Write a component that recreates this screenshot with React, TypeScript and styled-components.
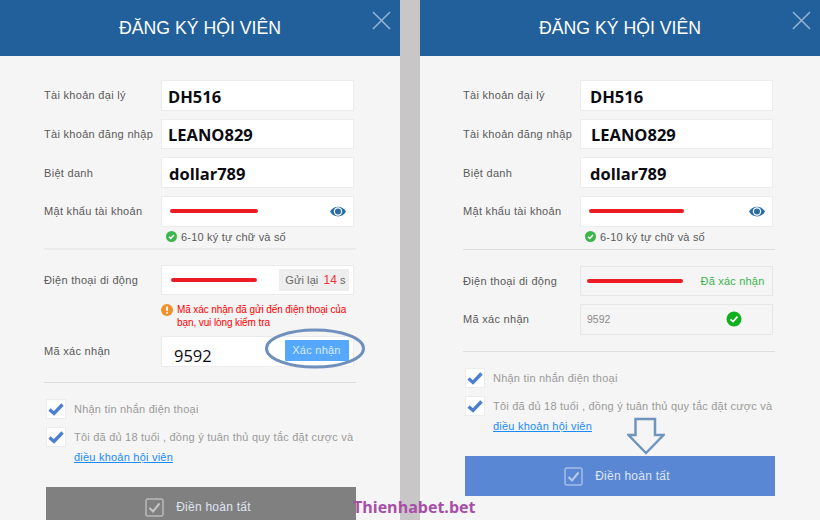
import React from "react";
import styled, { createGlobalStyle } from "styled-components";

const GlobalStyle = createGlobalStyle`
  html, body {
    margin: 0;
    padding: 0;
    background: #c8c6c6;
  }
  * {
    box-sizing: border-box;
  }
`;

const Page = styled.div`
  position: relative;
  display: flex;
  justify-content: space-between;
  width: 820px;
  height: 520px;
  overflow: hidden;
  font-family: "Liberation Sans", Arial, sans-serif;
`;

const Panel = styled.section`
  width: 400px;
  height: 520px;
  background: #f5f5f5;
  overflow: hidden;
`;

const Header = styled.header`
  position: relative;
  display: flex;
  align-items: center;
  justify-content: center;
  height: 56px;
  background: #21609a;
  color: #fff;
  font-size: 17.7px;
`;

const CloseIcon = styled.svg`
  position: absolute;
  top: 11px;
  right: 9px;
  width: 19px;
  height: 19px;
  stroke: #93b3d2;
  stroke-width: 1.6;
`;

const Body = styled.div<{ $left: number }>`
  padding: 24px 0 0 ${(p) => p.$left}px;
`;

const Fields = styled.div`
  display: flex;
  flex-direction: column;
  gap: 8.2px;
`;

const Row = styled.div<{ $top?: number }>`
  display: grid;
  grid-template-columns: 117px 192.5px;
  align-items: center;
  height: 30.5px;
  margin-top: ${(p) => p.$top ?? 0}px;
`;

const Label = styled.span`
  font-size: 11px;
  letter-spacing: 0.3px;
  color: #5a5a5a;
  white-space: nowrap;
`;

const Field = styled.div<{ $muted?: boolean }>`
  display: flex;
  align-items: center;
  height: 100%;
  overflow: hidden;
  background: ${(p) => (p.$muted ? "#f5f5f5" : "#fff")};
  border: 1px solid ${(p) => (p.$muted ? "#e6e6e6" : "#ececec")};
`;

const BoldValue = styled.span<{ $indent: number }>`
  margin: 2px 0 0 ${(p) => p.$indent}px;
  font-family: "Open Sans", sans-serif;
  font-size: 16.5px;
  font-weight: 700;
  color: #0b0b12;
`;

const TypedCode = styled.span`
  margin: 8px 0 0 12px;
  font-family: "Open Sans", sans-serif;
  font-size: 16.5px;
  color: #0b0b12;
`;

const PlainCode = styled.span`
  margin-left: 6px;
  font-size: 10.5px;
  color: #8b8b8b;
`;

const Redaction = styled.i<{ $width: number; $indent: number }>`
  display: block;
  flex: none;
  width: ${(p) => p.$width}px;
  height: 4px;
  margin-left: ${(p) => p.$indent}px;
  border-radius: 2px;
  background: #ed1c24;
`;

const EyeIcon = styled.svg`
  flex: none;
  width: 16px;
  height: 13px;
  margin-left: auto;
  margin-right: 7px;
`;

const Hint = styled.div`
  display: flex;
  align-items: center;
  gap: 4px;
  height: 20px;
  margin-left: 122px;
  font-size: 11px;
  letter-spacing: 0.2px;
  color: #5a5a5a;
`;

const Divider = styled.hr<{ $top: number; $thick?: boolean }>`
  width: 312px;
  height: ${(p) => (p.$thick ? 2 : 1)}px;
  margin: ${(p) => p.$top}px 0 0;
  border: 0;
  background: ${(p) => (p.$thick ? "#ececec" : "#dedede")};
`;

const ResendBox = styled.div`
  display: flex;
  align-items: center;
  justify-content: center;
  gap: 5px;
  width: 70px;
  height: 22px;
  margin-left: auto;
  margin-right: 4px;
  padding-left: 4px;
  background: #eee;
  font-size: 11px;
  letter-spacing: 0.1px;
  color: #666;
`;

const Countdown = styled.span`
  font-size: 12px;
  color: #e33;
`;

const Warning = styled.div`
  display: flex;
  gap: 4px;
  margin: 9px 0 0 117px;
  width: 196px;
  font-size: 10px;
  letter-spacing: -0.1px;
  line-height: 12.5px;
  color: #f00;
`;

const ConfirmButton = styled.button`
  width: 64px;
  height: 21px;
  margin: 0 4px 2px auto;
  padding: 0;
  border: 0;
  border-radius: 1px;
  background: #55a8fb;
  color: #d9ecff;
  font: 11px "Liberation Sans", Arial, sans-serif;
  letter-spacing: 0.25px;
`;

const Verified = styled.span`
  margin-left: auto;
  margin-right: 7px;
  font-size: 11px;
  letter-spacing: 0.2px;
  color: #3ab54a;
`;

const VerifiedIcon = styled.svg`
  flex: none;
  width: 16px;
  height: 16px;
  margin-left: auto;
  margin-right: 30px;
`;

const Consent = styled.label<{ $top: number }>`
  display: grid;
  grid-template-columns: 20px 1fr;
  column-gap: 8px;
  width: 320px;
  margin: ${(p) => p.$top}px 0 0 2px;
  font-size: 11px;
  letter-spacing: 0.22px;
  line-height: 20px;
  color: #9a9a9a;
`;

const CheckBox = styled.span`
  display: flex;
  align-items: center;
  justify-content: center;
  width: 20px;
  height: 20px;
  background: #fff;
  border: 1px solid #ececec;
`;

const TermsLink = styled.a`
  display: block;
  color: #1a8cff;
  text-decoration: underline;
`;

const Submit = styled.button<{ $active?: boolean }>`
  display: flex;
  align-items: center;
  justify-content: center;
  gap: 12px;
  width: 310px;
  height: 40px;
  margin: 20px 0 0 2px;
  padding: 1px 6px 0 0;
  border: 0;
  background: ${(p) => (p.$active ? "#5a87d4" : "#808080")};
  color: #dfe6f2;
  font: 12px "Liberation Sans", Arial, sans-serif;
  letter-spacing: 0.25px;
`;

const SubmitIcon = styled.svg`
  width: 19px;
  height: 19px;
`;

const CallOutEllipse = styled.svg`
  position: absolute;
  left: 265px;
  top: 328px;
  width: 100px;
  height: 41px;
`;

const DownArrow = styled.svg`
  position: absolute;
  left: 627px;
  top: 417px;
  width: 38px;
  height: 38px;
`;

const Watermark = styled.div`
  position: absolute;
  left: 353px;
  top: 496px;
  font-family: "Open Sans", sans-serif;
  font-size: 16px;
  font-weight: 700;
  color: #a64fa9;
`;

const Eye = () => (
  <EyeIcon viewBox="0 0 16 13">
    <path d="M0 6.500C3.500 0 12.500 0 16 6.500C12.500 13 3.500 13 0 6.500Z" fill="#2a6ca6" />
    <circle cx="8" cy="6.500" r="4.200" fill="#fff" />
    <circle cx="8" cy="6.500" r="3" fill="#2a6ca6" />
  </EyeIcon>
);

const TickMark = () => (
  <svg width="16" height="14" viewBox="0 0 16 14">
    <path d="M1.500 7.500L6 11.500L14.500 2.500" fill="none" stroke="#4c7fd1" strokeWidth="3.400" />
  </svg>
);

const SubmitTick = () => (
  <SubmitIcon viewBox="0 0 19 19">
    <rect x="1" y="1" width="17" height="17" rx="2" fill="none" stroke="#fff" strokeOpacity="0.45" strokeWidth="1.500" />
    <path d="M4.500 10L8 13.500L14.500 5.500" fill="none" stroke="#fff" strokeOpacity="0.55" strokeWidth="2" />
  </SubmitIcon>
);

const GreenDot = () => (
  <svg width="11" height="11" viewBox="0 0 11 11">
    <circle cx="5.500" cy="5.500" r="5.500" fill="#3cb54a" />
    <path d="M3 5.700L4.800 7.400L8 3.900" fill="none" stroke="#fff" strokeWidth="1.500" />
  </svg>
);

const OrangeBang = () => (
  <svg width="12" height="12" viewBox="0 0 12 12" style={{ flex: "none" }}>
    <circle cx="6" cy="6" r="6" fill="#f0922e" />
    <path d="M6 2.500V7M6 8.300V9.800" stroke="#fff" strokeWidth="1.800" />
  </svg>
);

const Consents = ({ top }: { top: number }) => (
  <>
    <Consent $top={top}>
      <CheckBox>
        <TickMark />
      </CheckBox>
      <span>Nhận tin nhắn điện thoại</span>
    </Consent>
    <Consent $top={8}>
      <CheckBox>
        <TickMark />
      </CheckBox>
      <span>
        Tôi đã đủ 18 tuổi , đồng ý tuân thủ quy tắc đặt cược và
        <TermsLink>điều khoản hội viên</TermsLink>
      </span>
    </Consent>
  </>
);

const PanelHeader = () => (
  <Header>
    ĐĂNG KÝ HỘI VIÊN
    <CloseIcon viewBox="0 0 20 20">
      <path d="M1 1L19 19M19 1L1 19" />
    </CloseIcon>
  </Header>
);

const AccountFields = ({ indents }: { indents: number[] }) => (
  <Fields>
    <Row>
      <Label>Tài khoản đại lý</Label>
      <Field>
        <BoldValue $indent={indents[0]}>DH516</BoldValue>
      </Field>
    </Row>
    <Row>
      <Label>Tài khoản đăng nhập</Label>
      <Field>
        <BoldValue $indent={indents[1]}>LEANO829</BoldValue>
      </Field>
    </Row>
    <Row>
      <Label>Biệt danh</Label>
      <Field>
        <BoldValue $indent={indents[2]}>dollar789</BoldValue>
      </Field>
    </Row>
    <Row>
      <Label>Mật khẩu tài khoản</Label>
      <Field>
        <Redaction $width={indents[3]} $indent={8} />
        <Eye />
      </Field>
    </Row>
  </Fields>
);

export default function App() {
  return (
    <Page>
      <GlobalStyle />
      <Panel>
        <PanelHeader />
        <Body $left={44}>
          <AccountFields indents={[6, 6, 7, 88]} />
          <Hint>
            <GreenDot />
            6-10 ký tự chữ và số
          </Hint>
          <Divider $top={1} $thick />
          <Row $top={15}>
            <Label>Điện thoại di động</Label>
            <Field>
              <Redaction $width={86} $indent={9} />
              <ResendBox>
                Gửi lại
                <span>
                  <Countdown>14</Countdown> s
                </span>
              </ResendBox>
            </Field>
          </Row>
          <Warning>
            <OrangeBang />
            <span>Mã xác nhận đã gửi đến điện thoại của bạn, vui lòng kiểm tra</span>
          </Warning>
          <Row $top={7}>
            <Label>Mã xác nhận</Label>
            <Field>
              <TypedCode>9592</TypedCode>
              <ConfirmButton>Xác nhận</ConfirmButton>
            </Field>
          </Row>
          <Divider $top={15} />
          <Consents top={16} />
          <Submit>
            <SubmitTick />
            Điền hoàn tất
          </Submit>
        </Body>
      </Panel>
      <Panel>
        <PanelHeader />
        <Body $left={43}>
          <AccountFields indents={[9, 10, 9, 95]} />
          <Hint>
            <GreenDot />
            6-10 ký tự chữ và số
          </Hint>
          <Divider $top={2} />
          <Row $top={16}>
            <Label>Điện thoại di động</Label>
            <Field $muted>
              <Redaction $width={96} $indent={6} />
              <Verified>Đã xác nhận</Verified>
            </Field>
          </Row>
          <Row $top={8}>
            <Label>Mã xác nhận</Label>
            <Field $muted>
              <PlainCode>9592</PlainCode>
              <VerifiedIcon viewBox="0 0 16 16">
                <circle cx="8" cy="8" r="7.500" fill="#0fb01e" />
                <path d="M4.500 8.300L7 10.600L11.500 5.700" fill="none" stroke="#fff" strokeWidth="1.800" />
              </VerifiedIcon>
            </Field>
          </Row>
          <Divider $top={16} />
          <Consents top={16} />
          <Submit $active>
            <SubmitTick />
            Điền hoàn tất
          </Submit>
        </Body>
      </Panel>
      <CallOutEllipse viewBox="0 0 100 41">
        <ellipse cx="50" cy="20.500" rx="48.500" ry="18.500" fill="none" stroke="#6f8fbc" strokeWidth="3" />
      </CallOutEllipse>
      <DownArrow viewBox="0 0 38 38">
        <path d="M8.500 2H28V18H36.500L19 36L1.500 18H8.500Z" fill="#f5f5f5" stroke="#7095bd" strokeWidth="2.500" />
      </DownArrow>
      <Watermark>Thienhabet.bet</Watermark>
    </Page>
  );
}
